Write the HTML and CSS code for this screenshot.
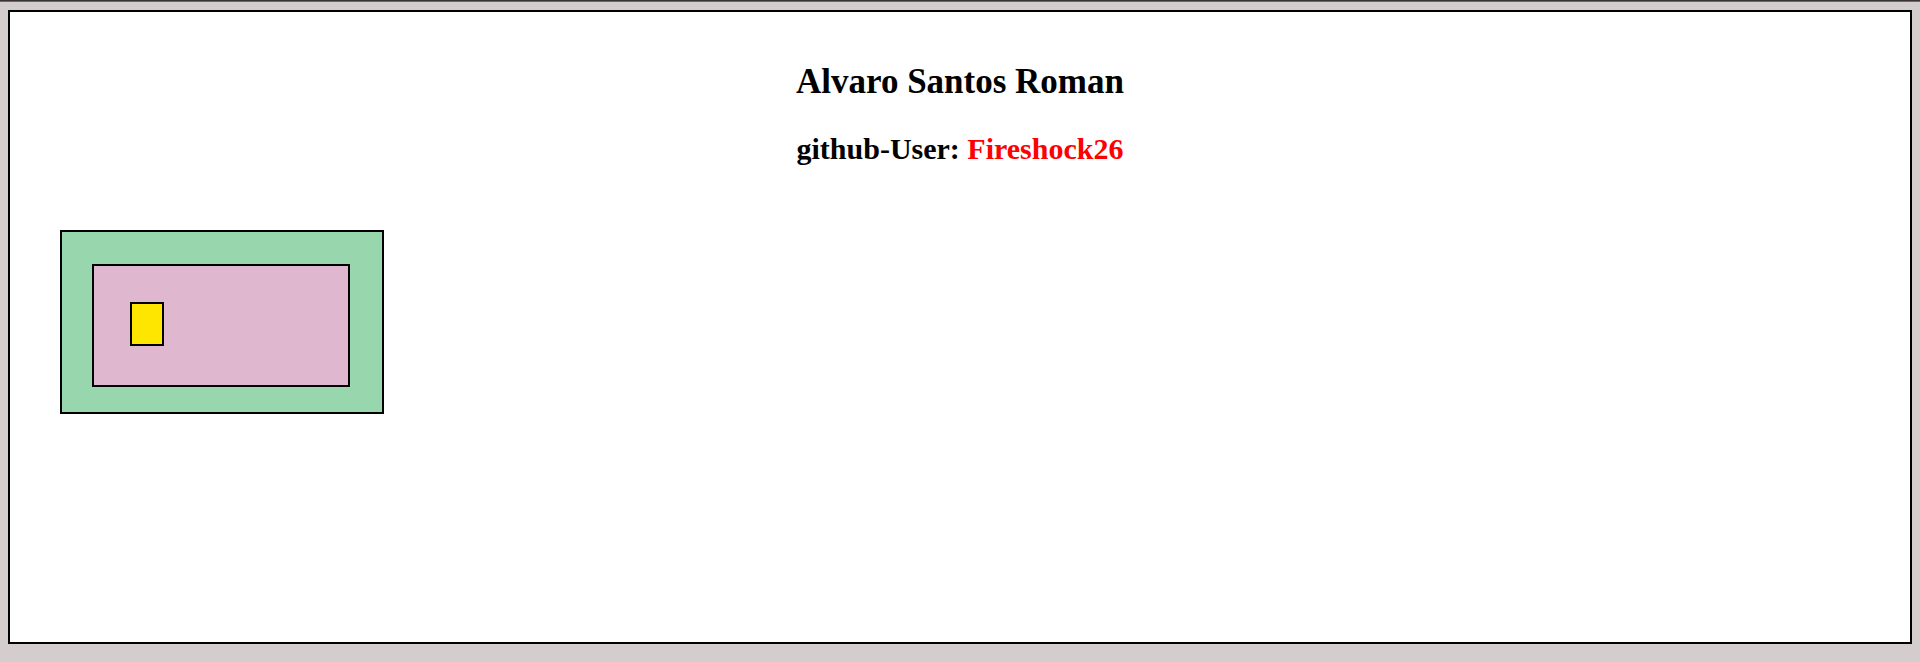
FILE: index.html
```html
<!DOCTYPE html>
<html lang="es">
<head>
<meta charset="utf-8">
<title>Alvaro Santos Roman</title>
<link rel="stylesheet" href="styles.css">
</head>
<body>
<main class="frame">
  <header class="heading">
    <h1 class="name">Alvaro Santos Roman</h1>
    <h2 class="user">github-User: <span class="handle">Fireshock26</span></h2>
  </header>
  <div class="box outer">
    <div class="box middle">
      <div class="box inner"></div>
    </div>
  </div>
</main>
</body>
</html>
```

FILE: styles.css
```css
* {
  box-sizing: border-box;
}

body {
  margin: 0;
  min-height: 100vh;
  display: flex;
  padding: 9px 8px 18px;
  border-top: 1px solid #383434;
  box-shadow: inset 0 1px #6b6766;
  background: #d3cecd;
  font-family: "Liberation Serif", "Times New Roman", serif;
}

.frame {
  flex: 1;
  padding: 50px;
  border: 2px solid #000;
  background: #fff;
}

.heading {
  display: flex;
  flex-direction: column;
  align-items: center;
  gap: 28px;
  margin-bottom: 62px;
}

.name,
.user {
  margin: 0;
}

.name {
  font-size: 35px;
  line-height: 40px;
}

.user {
  font-size: 30px;
  line-height: 38px;
}

.handle {
  color: #f00;
}

.box {
  border: 2px solid #000;
}

.outer {
  width: 324px;
  padding: 32px 32px 25px 30px;
  background: #98d7ad;
}

.middle {
  padding: 36px 36px 39px;
  background: #dfb7cf;
}

.inner {
  width: 34px;
  height: 44px;
  background: #ffe600;
}
```
